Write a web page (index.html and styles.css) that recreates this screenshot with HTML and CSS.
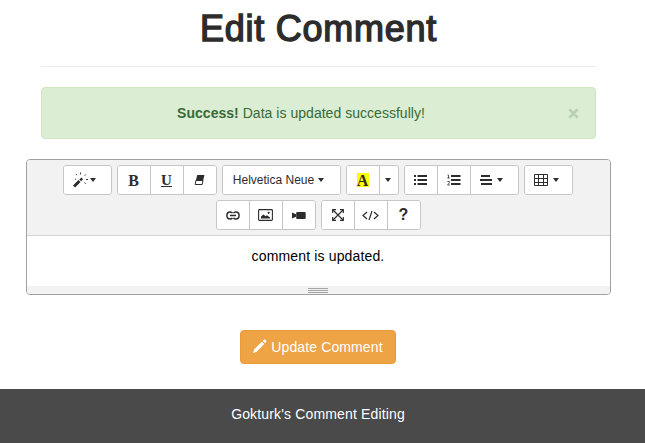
FILE: index.html
```
<!DOCTYPE html>
<html lang="en">
<head>
<meta charset="utf-8">
<title>Edit Comment</title>
<link rel="stylesheet" href="styles.css">
</head>
<body>
<main class="page">
  <header class="page-header"><h1><span>Edit Comment</span></h1></header>
  <div class="alert"><p><strong>Success!</strong> <span>Data is updated successfully!</span></p><button class="close" aria-label="Close"><svg width="11" height="11" viewBox="0 0 11 11"><path d="M1.4 1.4 9.6 9.6M9.6 1.4 1.4 9.6" stroke="currentColor" stroke-width="2.7"/></svg></button></div>
  <section class="editor">
    <div class="toolbar">
      <div class="row">
        <div class="group"><button class="wide magic"><svg width="16" height="16" viewBox="0 0 16 16"><path d="M1 14.500 6.500 9" stroke="currentColor" stroke-width="3"/><path d="m7.200 8.300 2-2" stroke="currentColor" stroke-width="2.400"/><path d="M7.500 .500v2M3 2l1 1.200M2 7.500l1-.6M12.800 2.500l-1.200 1.300M13 7.500h2M11.500 10.500l1.200 1.400" stroke="currentColor" stroke-width=".9"/></svg><i class="caret"></i></button></div>
        <div class="group"><button><b class="serif">B</b></button><button><b class="serif under">U</b></button><button><svg width="12" height="12" viewBox="0 0 12 12"><path d="M3.2 1h7.300L9 7H1.800z" fill="currentColor"/><path d="M1.900 6.500h7.100L8.200 10.500H1.200z" fill="none" stroke="currentColor"/></svg></button></div>
        <div class="group"><button class="font"><span>Helvetica Neue</span><i class="caret"></i></button></div>
        <div class="group"><button><b class="serif color">A</b></button><button class="drop"><i class="caret"></i></button></div>
        <div class="group"><button><svg width="14" height="12" viewBox="0 0 14 12"><path d="M0 2h2M0 6h2M0 10h2M3.500 2H13M3.500 6H13M3.500 10H13" stroke="currentColor" stroke-width="2"/></svg></button><button><svg width="14" height="12" viewBox="0 0 14 12"><path d="M4 2h9.500M4 6h9.500M4 10h9.500" stroke="currentColor" stroke-width="2"/><path d="M.5 1h1v3M.3 4h2.400M.3 7.500h2v1.400L.6 11h2.200" fill="none" stroke="currentColor" stroke-width=".8"/></svg></button><button class="wide align"><svg width="13" height="12" viewBox="0 0 13 12"><path d="M1 2h9M0 6h12M1 10h11" stroke="currentColor" stroke-width="2"/></svg><i class="caret"></i></button></div>
        <div class="group"><button class="wide table"><svg width="14" height="12" viewBox="0 0 14 12"><path d="M.5.500h13v11H.5zM.5 4.500h13M.5 8.500h13M4.500.5v11M9.500.5v11" fill="none" stroke="currentColor"/></svg><i class="caret"></i></button></div>
      </div>
      <div class="row">
        <div class="group"><button><svg width="14" height="9" viewBox="0 0 14 9"><path d="M6.500 2.200C6 1.300 5.300 1 4.200 1 2 1 .9 2.300.9 4.500S2 8 4.200 8c1.100 0 1.800-.3 2.300-1.200M7.500 2.200C8 1.300 8.700 1 9.800 1 12 1 13.100 2.300 13.100 4.500S12 8 9.800 8C8.700 8 8 7.700 7.500 6.800M4 4.500h6" fill="none" stroke="currentColor" stroke-width="1.500"/></svg></button><button><svg width="15" height="12" viewBox="0 0 15 12"><rect x=".6" y=".6" width="13.800" height="10.800" rx=".8" fill="none" stroke="currentColor" stroke-width="1.100"/><path d="M3 9.500V7.500l2.500-2 2 1.700 1.500-1 3 2.300v1z" fill="currentColor"/><circle cx="10.700" cy="3.800" r="1.100" fill="currentColor"/></svg></button><button><svg width="14" height="9" viewBox="0 0 14 9"><rect x="4.200" y="1" width="9.500" height="7" rx="1" fill="currentColor"/><path d="m0 1.500 4 1.700v2.600L0 7.500z" fill="currentColor"/></svg></button></div>
        <div class="group"><button><svg width="12" height="12" viewBox="0 0 12 12"><path d="m1 1 10 10M11 1 1 11" stroke="currentColor" stroke-width="1.200"/><path d="M.7 4V.7H4M8 .7h3.300V4M.7 8v3.300H4M8 11.300h3.300V8" fill="none" stroke="currentColor" stroke-width="1.200"/></svg></button><button><svg width="17" height="11" viewBox="0 0 17 11"><path d="M5 2 1 5.500 5 9M12 2l4 3.500L12 9M10 1 7 10" fill="none" stroke="currentColor" stroke-width="1.200"/></svg></button><button><b class="question">?</b></button></div>
      </div>
    </div>
    <div class="content" contenteditable="true"><span>comment is updated.</span></div>
    <div class="resize"><i></i><i></i><i></i></div>
  </section>
  <button class="update"><svg width="14" height="15" viewBox="0 0 14 15"><path d="m0 14 1.200-3.700L8.900 2.700l2.300 2.300L3.700 12.700zM9.700 1.900 11 .6q.6-.4 1.200.2l1 1q.5.600 0 1.200L12 4.200z" fill="currentColor"/></svg><span>Update Comment</span></button>
</main>
<footer><p>Gokturk's Comment Editing</p></footer>
</body>
</html>
```
FILE: styles.css
```
* { box-sizing: border-box; }
body { margin: 0; height: 443px; overflow: hidden; display: flex; flex-direction: column; background: #fff; color: #2c2c2c; font: 14px/20px "Liberation Sans", Arial, sans-serif; }
h1, p { margin: 0; }
button { margin: 0; padding: 0; color: inherit; font: inherit; }
svg { display: block; flex: none; }
.page { width: 637px; height: 389px; padding: 0 26px; display: flex; flex-direction: column; flex: none; align-items: center; }
.page-header { width: 555px; height: 67px; border-bottom: 1px solid #eaeaea; text-align: center; }
h1 { padding-top: 9px; font-size: 36px; line-height: 40px; font-weight: 400; letter-spacing: .73px; -webkit-text-stroke: 1.4px #2c2c2c; }
.alert { width: 555px; height: 52px; margin-top: 20px; padding: 0 16px 0 15px; display: flex; align-items: center; background: #dbedd3; border: 1px solid #d0e6be; border-radius: 4px; color: #386a39; }
.alert p { flex: 1; text-align: center; padding-right: 23px; letter-spacing: .03px; }
.close { display: flex; border: 0; background: none; color: #b7d0b1; }
.editor { width: 585px; height: 136px; margin-top: 20px; flex: none; border: 1px solid #a0a0a0; border-radius: 4px; overflow: hidden; }
.toolbar { height: 76px; padding-top: 5px; display: flex; flex-direction: column; gap: 5px; background: #f2f2f2; border-bottom: 1px solid #d3d3d3; }
.row { display: flex; justify-content: center; gap: 5px; height: 30px; }
.row:first-child { padding-right: 1px; }
.group { display: flex; border: 1px solid #c6c6c6; border-radius: 3px; overflow: hidden; background: #fff; }
.group button { width: 33px; padding-right: 1px; display: flex; align-items: center; justify-content: center; border: 0; border-left: 1px solid #c6c6c6; background: #fff; }
.group button:first-child { width: 32px; border-left: 0; }
.group .wide, .group .wide:first-child { width: 47px; }
.group .wide:not(:first-child) { width: 48px; }
.group .font:first-child { width: 117px; gap: 4px; font-size: 12px; padding-right: 6px; }
.group .drop { width: 19px; padding-right: 2px; }
.caret { width: 0; height: 0; border: 3px solid transparent; border-top: 4px solid #2c2c2c; border-bottom: 0; }
.group .magic { padding-right: 7px; gap: 1px; }
.group .align { gap: 4px; padding-right: 6px; }
.group .table { gap: 4px; padding-right: 5px; }
.group .table svg { margin-right: 1px; }
.serif { font: bold 16px/17px "Liberation Serif", serif; }
.under { font-size: 15px; line-height: 14px; text-decoration: underline; text-underline-offset: 1px; }
.color { width: 12px; height: 14px; font-size: 16px; line-height: 15px; text-align: center; background: #ff0; }
.question { font-size: 16px; }
.content { height: 50px; padding: 10px 1px 0 0; text-align: center; color: #000; outline: 0; letter-spacing: .15px; }
.resize { height: 8px; padding: 2px 2px 0 0; display: flex; flex-direction: column; gap: 1px; align-items: center; background: #f2f2f2; }
.resize i { width: 20px; height: 1px; flex: none; background: #a5a5a5; }
.update { width: 156px; height: 34px; margin: 35px 1px 0 0; flex: none; display: flex; align-items: center; justify-content: center; gap: 4px; border: 1px solid #e99a37; border-radius: 4px; background: #eea345; color: #fff; letter-spacing: .12px; }
.update svg { margin-top: -2px; }
footer { width: 100%; height: 54px; padding: 15px 9px 0 0; background: #4a4a4a; color: #fff; text-align: center; letter-spacing: .15px; }
```
